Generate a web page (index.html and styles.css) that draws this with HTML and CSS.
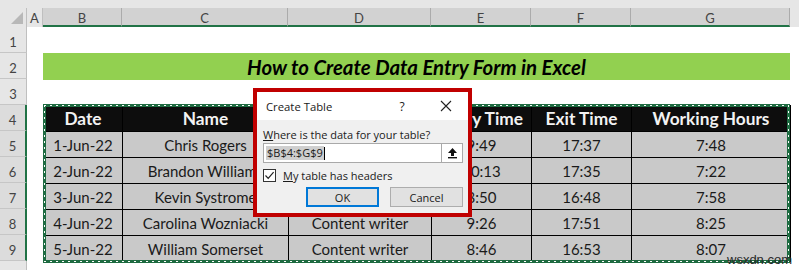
FILE: index.html
```html
<!DOCTYPE html>
<html>
<head>
    <title>Create Table</title>
    <link rel="stylesheet" href="styles.css">
</head>
<body>
<div class="sheet">
    <div class="top-strip"></div>
    <div class="col-heads">
        <div class="corner"><span class="tri"></span></div>
        <div class="ch col-a">A</div>
        <div class="ch sel col-b">B</div>
        <div class="ch sel col-c">C</div>
        <div class="ch sel col-d">D</div>
        <div class="ch sel col-e">E</div>
        <div class="ch sel col-f">F</div>
        <div class="ch sel col-g">G</div>
        <div class="ch col-h"></div>
    </div>
    <div class="grid-body">
        <div class="row-heads">
            <div class="rh">1</div>
            <div class="rh">2</div>
            <div class="rh">3</div>
            <div class="rh sel">4</div>
            <div class="rh sel">5</div>
            <div class="rh sel">6</div>
            <div class="rh sel">7</div>
            <div class="rh sel">8</div>
            <div class="rh sel">9</div>
            <div class="rh"></div>
        </div>
        <div class="cells">
            <div class="row"></div>
            <div class="row title-row"><div class="title">How to Create Data Entry Form in Excel</div></div>
            <div class="row"></div>
            <div class="table-wrap">
                <table class="data">
                    <colgroup>
                        <col class="w-b"><col class="w-c"><col class="w-d"><col class="w-e"><col class="w-f"><col class="w-g">
                    </colgroup>
                    <tr class="head">
                        <th>Date</th><th>Name</th><th>Designation</th><th>Entry Time</th><th>Exit Time</th><th>Working Hours</th>
                    </tr>
                    <tr><td>1-Jun-22</td><td>Chris Rogers</td><td>Manager</td><td>9:49</td><td>17:37</td><td>7:48</td></tr>
                    <tr><td>2-Jun-22</td><td>Brandon Williams</td><td>Designer</td><td>10:13</td><td>17:35</td><td>7:22</td></tr>
                    <tr><td>3-Jun-22</td><td>Kevin Systrome</td><td>Developer</td><td>8:50</td><td>16:48</td><td>7:58</td></tr>
                    <tr><td>4-Jun-22</td><td>Carolina Wozniacki</td><td>Content writer</td><td>9:26</td><td>17:51</td><td>8:25</td></tr>
                    <tr><td>5-Jun-22</td><td>William Somerset</td><td>Content writer</td><td>8:46</td><td>16:53</td><td>8:07</td></tr>
                </table>
                <div class="ants"></div>
            </div>
        </div>
    </div>

    <div class="dialog">
        <div class="dlg-title">
            <span class="dlg-name">Create Table</span>
            <span class="dlg-help">?</span>
            <span class="dlg-close">
                <svg width="12" height="12" viewBox="0 0 12 12"><path d="M1 1 L11 11 M11 1 L1 11" stroke="#222" stroke-width="1.1" fill="none"/></svg>
            </span>
        </div>
        <div class="dlg-body">
            <div class="dlg-label"><u>W</u>here is the data for your table?</div>
            <div class="range-box">
                <div class="range-text"><span class="range-sel">$B$4:$G$9</span><span class="caret"></span></div>
                <div class="range-btn">
                    <svg width="11" height="12" viewBox="0 0 11 12"><path d="M5.5 1 L10 6 L7 6 L7 9 L4 9 L4 6 L1 6 Z" fill="#111"/><rect x="1" y="10" width="9" height="1.4" fill="#111"/></svg>
                </div>
            </div>
            <div class="check-row">
                <span class="checkbox">
                    <svg width="11" height="11" viewBox="0 0 11 11"><path d="M1.5 5.5 L4.2 8.3 L9.6 2.2" stroke="#222" stroke-width="1.2" fill="none"/></svg>
                </span>
                <span><u>M</u>y table has headers</span>
            </div>
            <div class="btn-row">
                <div class="btn btn-ok">OK</div>
                <div class="btn">Cancel</div>
            </div>
        </div>
    </div>

    <div class="watermark">wsxdn.com</div>
</div>
</body>
</html>
```

FILE: styles.css
```css
body {
    margin: 0;
    padding: 0;
    background-color: white;
    font-family: Lato, "Liberation Sans", sans-serif;
    overflow: hidden;
}

.sheet {
    position: relative;
    width: 799px;
    height: 270px;
    overflow: hidden;
}

.top-strip {
    height: 8px;
    background-color: #e6e6e6;
}

/* column letters */
.col-heads {
    display: flex;
    height: 19px;
}

.ch {
    box-sizing: border-box;
    display: flex;
    align-items: center;
    justify-content: center;
    background-color: #e6e6e6;
    border-right: 1px solid #bfbfbf;
    font-size: 13px;
    color: #444;
}

.ch.sel {
    background-color: #d2d2d2;
    border-bottom: 2px solid #217346;
    border-right: 1px solid #ababab;
    padding-top: 2px;
}

.corner {
    position: relative;
    width: 27px;
    background-color: #e6e6e6;
    box-sizing: border-box;
    border-right: 1px solid #bfbfbf;
}

.tri {
    position: absolute;
    right: 3px;
    bottom: 3px;
    width: 0;
    height: 0;
    border-left: 12px solid transparent;
    border-bottom: 12px solid #b8b8b8;
}

.col-a { width: 16px; }
.col-b { width: 79px; }
.col-c { width: 166px; }
.col-d { width: 143px; }
.col-e { width: 100px; }
.col-f { width: 100px; }
.col-g { width: 159px; }
.col-h { flex: 1; border-right: none; }

.grid-body {
    display: flex;
}

.row-heads {
    width: 27px;
}

.rh {
    box-sizing: border-box;
    height: 26px;
    display: flex;
    align-items: flex-end;
    justify-content: center;
    padding-bottom: 2px;
    background-color: #e6e6e6;
    border-bottom: 1px solid #c6c6c6;
    border-right: 1px solid #bfbfbf;
    font-size: 13px;
    color: #444;
}

.rh.sel {
    background-color: #dcdcdc;
    border-right: 2px solid #217346;
}

.cells {
    flex: 1;
    padding-left: 16px;
}

.row {
    height: 26px;
}

.title-row {
    display: flex;
}

.title {
    width: 747px;
    height: 27px;
    background-color: #92d050;
    display: flex;
    align-items: center;
    justify-content: center;
    font-weight: bold;
    font-style: italic;
    font-size: 20.4px;
    color: #000;
}

.table-wrap {
    position: relative;
    width: 747px;
}

.data {
    border-collapse: collapse;
    table-layout: fixed;
    width: 747px;
}

.w-b { width: 79px; }
.w-c { width: 166px; }
.w-d { width: 143px; }
.w-e { width: 100px; }
.w-f { width: 100px; }
.w-g { width: 159px; }

.data tr {
    height: 26px;
}

.data td, .data th {
    border: 1px solid #000;
    padding: 0;
    text-align: center;
    white-space: nowrap;
    overflow: hidden;
}

.data td {
    background-color: #c9c9c9;
    font-size: 15px;
    color: #1a1a1a;
}

.data th {
    background-color: #0d0d0d;
    color: #f2f2f2;
    font-size: 17.3px;
    font-weight: bold;
}

/* copy selection marquee */
.ants {
    position: absolute;
    left: 0;
    right: 0;
    top: -1px;
    bottom: -1px;
    border: 3px solid #1e6b41;
    pointer-events: none;
}

.ants::after {
    content: "";
    position: absolute;
    inset: -2px;
    background:
        repeating-linear-gradient(90deg, #fff 0 2px, transparent 2px 6px) top / 100% 1px no-repeat,
        repeating-linear-gradient(90deg, #fff 0 2px, transparent 2px 6px) bottom / 100% 1px no-repeat,
        repeating-linear-gradient(180deg, #fff 0 2px, transparent 2px 6px) left / 1px 100% no-repeat,
        repeating-linear-gradient(180deg, #fff 0 2px, transparent 2px 6px) right / 1px 100% no-repeat;
}

/* Create Table dialog */
.dialog {
    position: absolute;
    left: 253px;
    top: 88px;
    width: 219px;
    height: 129px;
    box-sizing: border-box;
    border: 4px solid #c00000;
    background-color: #f0f0f0;
    font-family: "Open Sans", "Noto Sans", sans-serif;
    font-size: 11px;
    color: #1a1a1a;
    display: flex;
    flex-direction: column;
}

.dlg-title {
    height: 28px;
    background-color: #fff;
    display: flex;
    align-items: center;
    padding-left: 9px;
    font-size: 11.3px;
}

.dlg-name {
    flex: 1;
}

.dlg-help {
    width: 20px;
    text-align: center;
    margin-right: 24px;
    font-size: 12px;
}

.dlg-close {
    width: 20px;
    display: flex;
    justify-content: center;
    margin-right: 12px;
}

.dlg-body {
    flex: 1;
    padding: 6px 5px 0 6px;
}

.dlg-label {
    height: 17px;
    line-height: 17px;
}

.range-box {
    display: flex;
    height: 20px;
    box-sizing: border-box;
    border: 1px solid #a9a9a9;
    background-color: #fff;
}

.range-text {
    flex: 1;
    display: flex;
    align-items: center;
    padding-left: 2px;
}

.range-sel {
    background-color: #cfcfcf;
    line-height: 14px;
    padding: 0 1px;
}

.caret {
    width: 1px;
    height: 13px;
    background-color: #000;
}

.range-btn {
    width: 20px;
    border-left: 1px solid #a9a9a9;
    display: flex;
    align-items: center;
    justify-content: center;
}

.check-row {
    display: flex;
    align-items: center;
    gap: 7px;
    height: 24px;
}

.checkbox {
    width: 13px;
    height: 13px;
    box-sizing: border-box;
    border: 1px solid #333;
    background-color: #fff;
    display: flex;
    align-items: center;
    justify-content: center;
}

.btn-row {
    display: flex;
    justify-content: flex-end;
    gap: 11px;
}

.btn {
    width: 73px;
    height: 20px;
    box-sizing: border-box;
    border: 1px solid #adadad;
    background-color: #e1e1e1;
    display: flex;
    align-items: center;
    justify-content: center;
}

.btn-ok {
    border: 2px solid #0078d7;
}

.watermark {
    position: absolute;
    left: 727px;
    top: 252px;
    font-family: "Liberation Sans", sans-serif;
    font-size: 13px;
    color: #2a2a2a;
}
```
